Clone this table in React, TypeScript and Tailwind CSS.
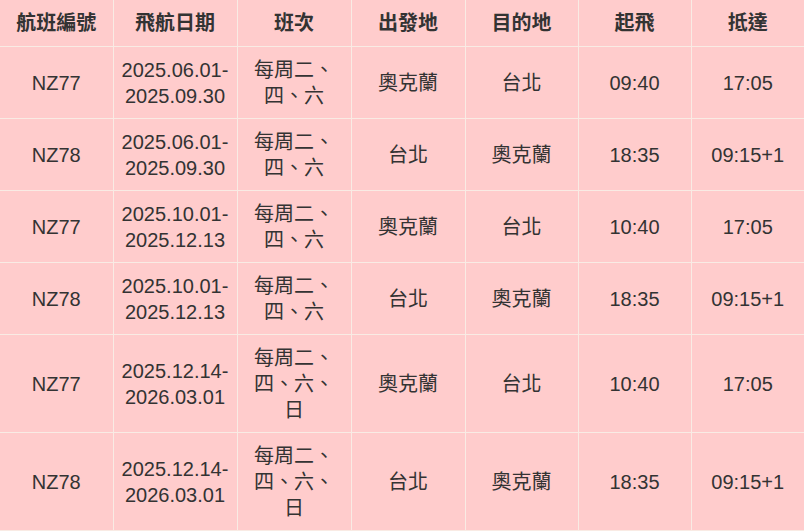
const headers = ['航班編號', '飛航日期', '班次', '出發地', '目的地', '起飛', '抵達'];

const widths = ['w-[113px]', 'w-[124px]', 'w-[114px]', 'w-[114px]', 'w-[113px]', 'w-[113px]', 'w-[113px]'];

type Row = {
  flight: string;
  dates: string[];
  days: string[];
  from: string;
  to: string;
  dep: string;
  arr: string;
};

const rows: Row[] = [
  { flight: 'NZ77', dates: ['2025.06.01-', '2025.09.30'], days: ['每周二、', '四、六'], from: '奧克蘭', to: '台北', dep: '09:40', arr: '17:05' },
  { flight: 'NZ78', dates: ['2025.06.01-', '2025.09.30'], days: ['每周二、', '四、六'], from: '台北', to: '奧克蘭', dep: '18:35', arr: '09:15+1' },
  { flight: 'NZ77', dates: ['2025.10.01-', '2025.12.13'], days: ['每周二、', '四、六'], from: '奧克蘭', to: '台北', dep: '10:40', arr: '17:05' },
  { flight: 'NZ78', dates: ['2025.10.01-', '2025.12.13'], days: ['每周二、', '四、六'], from: '台北', to: '奧克蘭', dep: '18:35', arr: '09:15+1' },
  { flight: 'NZ77', dates: ['2025.12.14-', '2026.03.01'], days: ['每周二、', '四、六、', '日'], from: '奧克蘭', to: '台北', dep: '10:40', arr: '17:05' },
  { flight: 'NZ78', dates: ['2025.12.14-', '2026.03.01'], days: ['每周二、', '四、六、', '日'], from: '台北', to: '奧克蘭', dep: '18:35', arr: '09:15+1' },
];

function Lines({ lines }: { lines: string[] }) {
  return (
    <>
      {lines.map((l, i) => (
        <span key={i} className="block">
          {l}
        </span>
      ))}
    </>
  );
}

export default function App() {
  const cell = 'px-[5px] pt-[10px] text-center align-middle border-b border-[#f9ebe4]';
  return (
    <div className="w-[804px] h-[531px] overflow-hidden bg-[#ffcccc] font-['Liberation_Sans','Noto_Sans_CJK_TC',sans-serif] text-[20px] leading-[26px] text-[#333333]">
      <table className="w-[804px] table-fixed border-collapse">
        <thead>
          <tr>
            {headers.map((h, i) => (
              <th
                key={h}
                className={`${widths[i]} ${cell} pb-[10px] font-bold ${i < 6 ? 'border-r' : ''}`}
              >
                {h}
              </th>
            ))}
          </tr>
        </thead>
        <tbody>
          {rows.map((r, idx) => {
            const vals: (string | string[])[] = [r.flight, r.dates, r.days, r.from, r.to, r.dep, r.arr];
            return (
              <tr key={idx}>
                {vals.map((v, i) => (
                  <td key={i} className={`${cell} pb-[9px] ${i < 6 ? 'border-r' : ''}`}>
                    {Array.isArray(v) ? <Lines lines={v} /> : v}
                  </td>
                ))}
              </tr>
            );
          })}
        </tbody>
      </table>
    </div>
  );
}
